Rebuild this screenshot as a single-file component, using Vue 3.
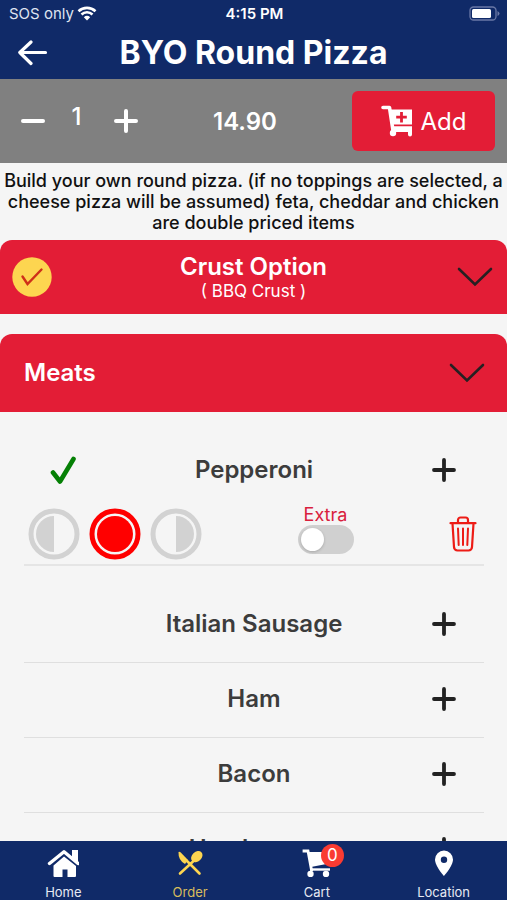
<script setup>
import { ref } from 'vue'

const quantity = ref(1)
const portion = ref('whole')
const extra = ref(false)
const portions = ['left', 'whole', 'right']
const toppings = ['Italian Sausage', 'Ham', 'Bacon', 'Hamburger']
</script>

<template>
  <div class="screen">
    <header class="header">
      <div class="status">
        <div class="carrier">
          <span>SOS only</span>
          <svg width="20" height="15" viewBox="0 0 20 15" aria-hidden="true">
            <path d="M1.5 5.2a12.4 12.4 0 0 1 17 0M4.5 8.5a8 8 0 0 1 11 0" fill="none" stroke="#fff" stroke-width="2.6" />
            <path d="M6.8 11.2a4.8 4.8 0 0 1 6.4 0L10 14.6z" fill="#fff" />
          </svg>
        </div>
        <span class="clock">4:15 PM</span>
        <svg class="battery" width="31" height="15" viewBox="0 0 31 15" aria-hidden="true">
          <rect x="1" y="1" width="26" height="13" rx="3.5" fill="none" stroke="#6a78a6" stroke-width="1.3" />
          <rect x="3" y="3" width="19" height="9" rx="1.5" fill="#fff" />
          <path d="M28.500 5v5q2-1 2-2.500t-2-2.500" fill="#6a78a6" />
        </svg>
      </div>
      <div class="titlebar">
        <button class="plain" aria-label="Back">
          <svg width="30" height="26" viewBox="0 0 30 26"><path d="M13 2 1.800 12.500 13 23.500M2 12.500H27.500" fill="none" stroke="#fff" stroke-width="3.200" stroke-linecap="round" stroke-linejoin="round" /></svg>
        </button>
        <h1>BYO Round Pizza</h1>
      </div>
    </header>

    <section class="orderbar">
      <div class="stepper">
        <button class="plain" aria-label="Decrease" @click="quantity = Math.max(1, quantity - 1)">
          <svg width="24" height="24" viewBox="0 0 24 24"><path d="M2 12h20" stroke="#fff" stroke-width="4" stroke-linecap="round" /></svg>
        </button>
        <span class="count">{{ quantity }}</span>
        <button class="plain" aria-label="Increase" @click="quantity++">
          <svg width="24" height="24" viewBox="0 0 24 24"><path d="M2 12h20M12 2v20" stroke="#fff" stroke-width="4" stroke-linecap="round" /></svg>
        </button>
      </div>
      <span class="price">14.90</span>
      <button class="add">
        <svg width="32" height="32" viewBox="0 0 32 32" aria-hidden="true">
          <path d="M2 2.500h6.500l3.500 23" fill="none" stroke="#fff" stroke-width="3.600" stroke-linecap="round" stroke-linejoin="round" />
          <path d="M8 4.500H31V19.500H11z" fill="#fff" />
          <path d="M11 21.300H31v8.200a2 2 0 0 1-4 0V27H12v-4z" fill="#fff" />
          <circle cx="12" cy="28" r="3.200" fill="#fff" />
          <path d="M20.500 7v10.500M15.200 12.200h10.600" stroke="#e31d36" stroke-width="2.800" />
        </svg>
        <span>Add</span>
      </button>
    </section>

    <main class="content">
      <p class="description">Build your own round pizza. (if no toppings are selected, a cheese pizza will be assumed) feta, cheddar and chicken are double priced items</p>

      <button class="panel crust">
        <svg width="40" height="40" viewBox="0 0 40 40" aria-hidden="true">
          <circle cx="20" cy="20" r="19.700" fill="#fdd550" />
          <path d="M10.500 19.500 15.500 27 29.500 12.500" fill="none" stroke="#cf3018" stroke-width="2.400" stroke-linecap="round" />
        </svg>
        <span class="panel-text">
          <span class="panel-title">Crust Option</span>
          <span class="panel-sub">( BBQ Crust )</span>
        </span>
        <svg width="40" height="20" viewBox="0 0 40 20" aria-hidden="true"><path d="M4 2 20 17.500 36 2" fill="none" stroke="#262022" stroke-width="2.600" stroke-linecap="round" /></svg>
      </button>

      <button class="panel meats">
        <span class="panel-title">Meats</span>
        <svg width="40" height="20" viewBox="0 0 40 20" aria-hidden="true"><path d="M4 2 20 17.500 36 2" fill="none" stroke="#262022" stroke-width="2.600" stroke-linecap="round" /></svg>
      </button>

      <ul class="list">
        <li class="selected">
          <div class="row">
            <svg width="28" height="30" viewBox="0 0 28 30" aria-hidden="true"><path d="M3 17.500 10 26.500 23.500 4" fill="none" stroke="#058005" stroke-width="4.600" stroke-linecap="round" stroke-linejoin="round" /></svg>
            <span class="name">Pepperoni</span>
            <button class="plain" aria-label="Add Pepperoni">
              <svg width="24" height="24" viewBox="0 0 24 24"><path d="M2 12h20M12 2v20" stroke="#222" stroke-width="3.800" stroke-linecap="round" /></svg>
            </button>
          </div>
          <div class="options">
            <div class="portions">
              <button v-for="p in portions" :key="p" class="plain portion" :class="{ active: portion === p }" :aria-label="p" @click="portion = p">
                <svg width="52" height="52" viewBox="0 0 52 52">
                  <circle cx="26" cy="26" r="23" fill="none" stroke="currentColor" stroke-width="5" />
                  <circle v-if="p === 'whole'" cx="26" cy="26" r="18" fill="currentColor" />
                  <path v-else-if="p === 'left'" d="M26 8a18 18 0 0 0 0 36z" fill="currentColor" />
                  <path v-else d="M26 8a18 18 0 0 1 0 36z" fill="currentColor" />
                </svg>
              </button>
            </div>
            <label class="extra">
              <span>Extra</span>
              <input v-model="extra" type="checkbox" class="switch" />
            </label>
            <button class="plain trash" aria-label="Remove Pepperoni">
              <svg width="28" height="36" viewBox="0 0 28 36" fill="none" stroke="#ed1c16" stroke-width="2.200" stroke-linecap="round" stroke-linejoin="round">
                <path d="M1.500 7.200h25M9 7V4a2.500 2.500 0 0 1 2.500-2.500h5A2.500 2.500 0 0 1 19 4v3M3.500 7.500 5 31a3.500 3.500 0 0 0 3.500 3.500h11A3.500 3.500 0 0 0 23 31l1.500-23.500" />
                <path d="M9 12.500 9.700 29M14 12.500V29M19 12.500 18.300 29" stroke-width="2" />
              </svg>
            </button>
          </div>
        </li>
        <li v-for="name in toppings" :key="name" class="row topping">
          <span class="name">{{ name }}</span>
          <button class="plain" :aria-label="'Add ' + name">
            <svg width="24" height="24" viewBox="0 0 24 24"><path d="M2 12h20M12 2v20" stroke="#222" stroke-width="3.800" stroke-linecap="round" /></svg>
          </button>
        </li>
      </ul>
    </main>

    <nav class="tabs">
      <a href="#home">
        <svg width="32" height="28" viewBox="0 0 32 28" aria-hidden="true">
          <path d="M2.500 14.500 17 2.800 31 14.500" fill="none" stroke="#fff" stroke-width="3.400" stroke-linecap="round" stroke-linejoin="round" />
          <path d="M25 1h6v13l-6-5z" fill="#fff" />
          <path d="M6.500 16.500 17 7.500 29 17V27a1 1 0 0 1-1 1h-7.500v-7.500h-5V28H7.500a1 1 0 0 1-1-1z" fill="#fff" />
        </svg>
        <span>Home</span>
      </a>
      <a href="#order" class="current">
        <svg width="26" height="28" viewBox="0 0 26 28" aria-hidden="true">
          <path d="M3 24.500 16 12.500M22.500 24.500 10 12" stroke="#fdd550" stroke-width="2.600" stroke-linecap="round" />
          <path d="M1.500 3q1-.8 2 .2L11 11l-3 4Q1 11 1.500 3z" fill="#fdd550" />
          <ellipse cx="19.800" cy="7.600" rx="4.800" ry="6.400" transform="rotate(46 19.800 7.600)" fill="#fdd550" />
        </svg>
        <span>Order</span>
      </a>
      <a href="#cart">
        <span class="cart">
          <svg width="30" height="28" viewBox="0 0 30 28" aria-hidden="true">
            <path d="M2 2h4l3.500 19" fill="none" stroke="#fff" stroke-width="2.800" stroke-linecap="square" />
            <path d="M7 3H29L27 14.500 9 18z" fill="#fff" />
            <path d="M8 20.500H28" stroke="#fff" stroke-width="2.400" />
            <circle cx="8.500" cy="25" r="3.200" fill="#fff" /><circle cx="24" cy="25" r="3.200" fill="#fff" />
          </svg>
          <span class="badge">0</span>
        </span>
        <span>Cart</span>
      </a>
      <a href="#location">
        <svg width="20" height="28" viewBox="0 0 20 28" aria-hidden="true">
          <path fill-rule="evenodd" d="M10 1.500a9 9 0 0 0-9 9C1 17 10 27 10 27s9-10 9-16.500a9 9 0 0 0-9-9zM10 7.500a3.200 3.200 0 1 1 0 6.400 3.200 3.200 0 0 1 0-6.400z" fill="#fff" />
        </svg>
        <span>Location</span>
      </a>
    </nav>
  </div>
</template>

<style>
body {
  margin: 0;
  background: #f5f5f5;
}
</style>

<style scoped>
.screen {
  display: flex;
  flex-direction: column;
  height: 100vh;
  font-family: Inter, "Liberation Sans", sans-serif;
  color: #fff;
}
svg {
  display: block;
  flex: none;
}
button {
  font: inherit;
  color: inherit;
  border: 0;
  cursor: pointer;
}
.plain {
  padding: 0;
  background: none;
}
.header {
  flex: none;
  background: #102a68;
}
.status {
  display: grid;
  grid-template-columns: 1fr auto 1fr;
  align-items: center;
  height: 27px;
  padding: 0 7px 0 9px;
  font-size: 15px;
}
.carrier {
  display: flex;
  align-items: center;
  gap: 3px;
  color: #dfe4f0;
}
.clock {
  font-weight: 600;
}
.battery {
  justify-self: end;
}
.titlebar {
  display: grid;
  grid-template-columns: 30px 1fr 30px;
  align-items: center;
  height: 52px;
  padding: 0 18px;
}
h1 {
  margin: 0;
  font-size: 32px;
  line-height: 40px;
  font-weight: 700;
  text-align: center;
}
.orderbar {
  flex: none;
  display: flex;
  align-items: center;
  height: 84px;
  padding: 0 12px 0 21px;
  background: #808080;
}
.stepper {
  display: flex;
  align-items: center;
  justify-content: space-between;
  width: 117px;
}
.count {
  padding: 0 6px 8px 0;
  font-size: 24px;
  line-height: 28px;
  font-weight: 500;
}
.price {
  flex: 1;
  text-align: center;
  font-size: 24px;
  font-weight: 600;
}
.add {
  display: flex;
  align-items: center;
  justify-content: center;
  gap: 8px;
  width: 143px;
  height: 60px;
  padding: 0;
  border-radius: 6px;
  background: #e31d36;
  font-size: 24px;
}
.content {
  flex: 1;
  min-height: 0;
  overflow-y: auto;
  scrollbar-width: none;
}
.description {
  margin: 0;
  padding: 7px 0;
  color: #111;
  font-size: 18px;
  line-height: 21px;
  font-weight: 500;
  text-align: center;
}
.panel {
  display: flex;
  align-items: center;
  width: 100%;
  border-radius: 12px 12px 0 0;
  background: #e31d36;
}
.crust {
  height: 74px;
  padding: 0 12px;
}
.meats {
  justify-content: space-between;
  height: 78px;
  margin-top: 20px;
  padding: 0 20px 0 24px;
}
.panel-text {
  flex: 1;
  display: flex;
  flex-direction: column;
  align-items: center;
}
.panel-title {
  font-size: 24px;
  line-height: 28px;
  font-weight: 600;
}
.panel-sub {
  font-size: 17px;
  line-height: 21px;
}
.list {
  list-style: none;
  margin: 0;
  padding: 24px 23px 0 24px;
}
.row {
  display: grid;
  grid-template-columns: 80px 1fr 80px;
  align-items: center;
  justify-items: center;
  height: 68px;
}
.name {
  grid-column: 2;
  color: #3c3c3c;
  font-size: 24px;
  line-height: 28px;
  font-weight: 600;
}
.selected {
  margin-bottom: 22px;
  border-bottom: 2px solid #e5e5e5;
}
.topping {
  height: 72px;
  padding-bottom: 2px;
  border-bottom: 1px solid #dfdfdf;
}
.options {
  display: flex;
  align-items: center;
  justify-content: space-between;
  height: 60px;
  padding: 0 7px 0 4px;
}
.portions {
  display: flex;
  gap: 9px;
}
.portion {
  color: #d2d2d2;
}
.portion.active {
  color: #f00;
}
.extra {
  align-self: flex-start;
  display: flex;
  flex-direction: column;
  align-items: center;
  color: #d9203d;
  font-size: 18px;
  line-height: 21px;
}
.switch {
  appearance: none;
  display: flex;
  align-items: center;
  width: 56px;
  height: 29px;
  margin: 0;
  padding: 0 3px;
  box-sizing: border-box;
  border-radius: 15px;
  background: #d0d0d0;
}
.switch::before {
  content: "";
  width: 23px;
  height: 23px;
  border-radius: 50%;
  background: #fff;
  box-shadow: 0 1px 3px #0003;
}
.switch:checked {
  justify-content: flex-end;
  background: #e31d36;
}
.tabs {
  flex: none;
  display: grid;
  grid-template-columns: repeat(4, 1fr);
  height: 59px;
  background: #102a68;
}
.tabs a {
  display: flex;
  flex-direction: column;
  align-items: center;
  gap: 6px;
  padding-top: 8px;
  color: #e6eaf4;
  font-size: 13px;
  line-height: 18px;
  text-decoration: none;
}
.tabs .current {
  color: #d8bc5c;
}
.cart {
  position: relative;
}
.badge {
  position: absolute;
  top: -5px;
  right: -12px;
  width: 23px;
  height: 23px;
  border-radius: 50%;
  background: #fa3b32;
  color: #fff;
  font-size: 17px;
  line-height: 23px;
  text-align: center;
}
</style>
